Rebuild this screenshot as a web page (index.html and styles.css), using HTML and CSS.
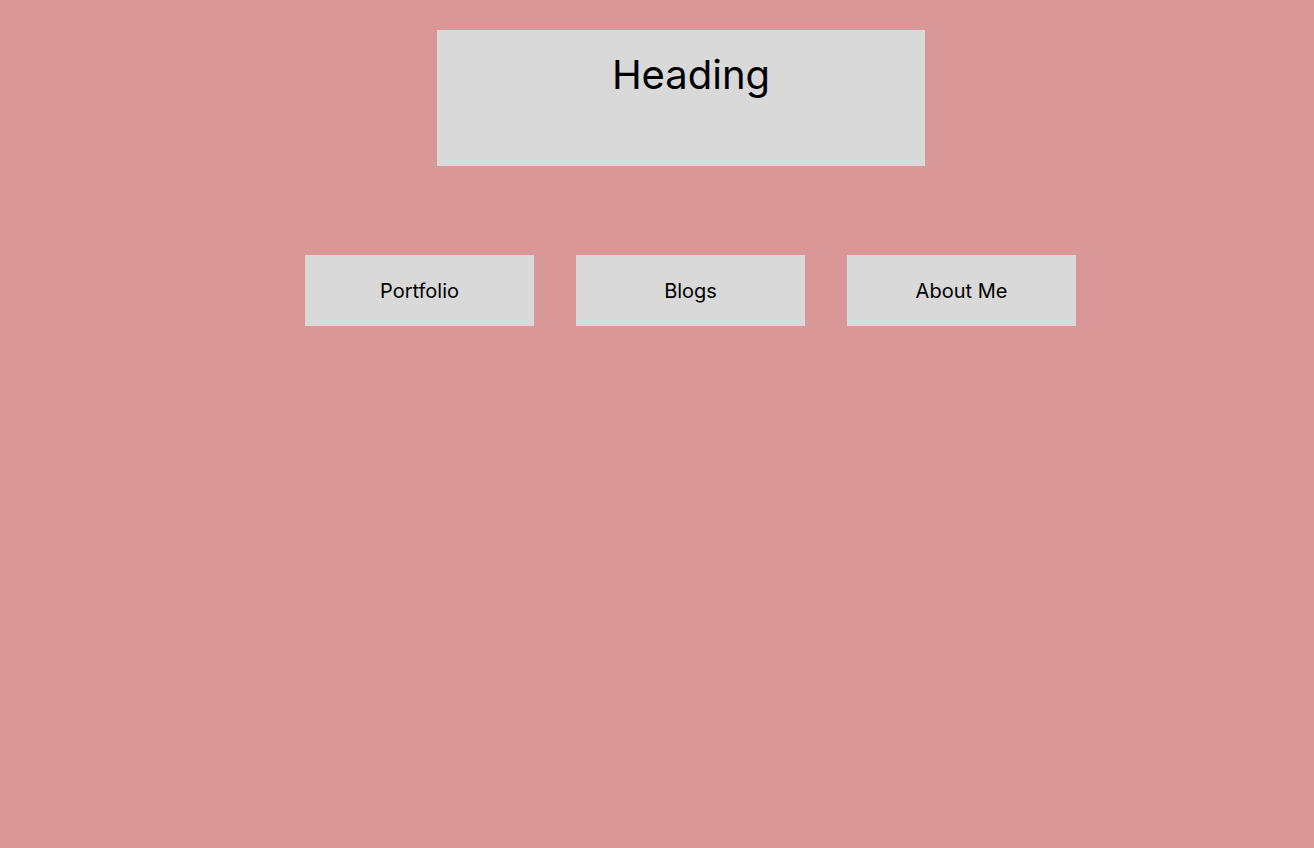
FILE: index.html
```html
<!DOCTYPE html>
<html lang="en">
<head>
    <meta charset="UTF-8">
    <title>Home</title>
    <link rel="stylesheet" href="styles.css">
</head>
<body>

<header class="header">
    <h1 class="title">Heading</h1>
</header>

<nav class="nav">
    <a class="nav-btn" href="#">Portfolio</a>
    <a class="nav-btn" href="#">Blogs</a>
    <a class="nav-btn" href="#">About Me</a>
</nav>

</body>
</html>
```
FILE: styles.css
```css
body {
    font-family: Inter, "Noto Sans", Arial, sans-serif;
    margin: 0;
    padding: 30px 0 0 0;
    background-color: #d99797; /* Rosa */
    min-height: 100vh;
    box-sizing: border-box;
}
.header {
    width: 488px;
    height: 136px;
    margin-left: 437px;
    padding: 21px 0 0 20px;
    box-sizing: border-box;
    background-color: #d9d9d9;
}
.title {
    margin: 0;
    font-size: 40px;
    font-weight: 400;
    line-height: 48px;
    text-align: center;
    color: #000;
}
.nav {
    display: flex;
    gap: 42px;
    margin-top: 89px;
    padding-left: 305px;
}
.nav-btn {
    display: flex;
    align-items: center;
    justify-content: center;
    width: 229px;
    height: 71px;
    background-color: #d9d9d9;
    color: #000;
    font-size: 20px;
    text-decoration: none;
}
```
